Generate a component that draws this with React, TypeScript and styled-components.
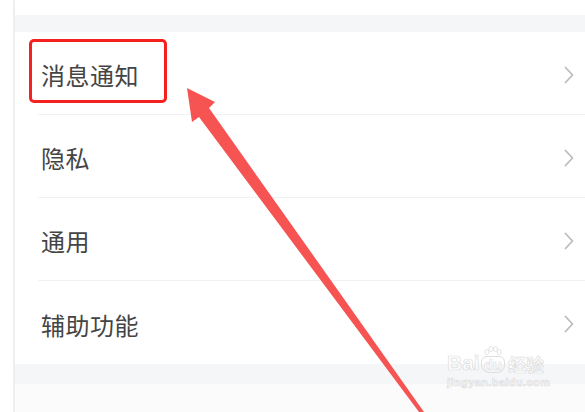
import React from "react";
import styled, { createGlobalStyle } from "styled-components";

const GlobalStyle = createGlobalStyle`
  html, body {
    margin: 0;
    padding: 0;
    background: #ffffff;
  }
  body {
    font-family: "Noto Sans CJK SC", "Noto Sans", sans-serif;
  }
`;

const Screen = styled.div`
  width: 585px;
  height: 412px;
  position: relative;
  overflow: hidden;
  display: flex;
  background: #ffffff;
`;

const Gutter = styled.div`
  width: 13px;
  flex-shrink: 0;
  border-right: 2px solid #efefef;
`;

const Main = styled.div`
  flex: 1;
  display: flex;
  flex-direction: column;
`;

const Spacer = styled.div<{ $h: number }>`
  height: ${(p) => p.$h}px;
  flex-shrink: 0;
`;

const Band = styled.div<{ $h: number }>`
  height: ${(p) => p.$h}px;
  flex-shrink: 0;
  background: #f5f6f8;
`;

const List = styled.div`
  display: flex;
  flex-direction: column;
`;

const Row = styled.div<{ $last?: boolean }>`
  height: 83px;
  margin-left: 23px;
  padding: 3px 11px 0 3px;
  box-sizing: border-box;
  display: flex;
  align-items: center;
  justify-content: space-between;
  border-bottom: ${(p) => (p.$last ? "none" : "1px solid #f1f1f1")};
`;

const Label = styled.span`
  font-size: 24px;
  color: #444444;
  letter-spacing: 0.5px;
`;

const Tail = styled.div`
  flex: 1;
  background: #fbfbfc;
`;

const Highlight = styled.div`
  position: absolute;
  left: 29px;
  top: 39px;
  width: 132px;
  height: 58px;
  border: 3px solid #f5211f;
  border-radius: 5px;
`;

const ArrowLayer = styled.svg`
  position: absolute;
  left: 0;
  top: 0;
  pointer-events: none;
`;

const Watermark = styled.div`
  position: absolute;
  left: 447px;
  top: 346px;
  display: flex;
  flex-direction: column;
  align-items: flex-start;
  color: rgba(255, 255, 255, 0.85);
  -webkit-text-stroke: 0.7px #dcdee1;
  font-family: "Liberation Sans", Arial, sans-serif;
`;

const MarkLine = styled.div`
  display: flex;
  align-items: flex-end;
  font-weight: 700;
  font-size: 21px;
  line-height: 1;
`;

const PawBox = styled.span`
  display: flex;
  flex-direction: column;
  align-items: center;
  margin: 0 3px 0 1px;
`;

const Du = styled.span`
  font-size: 15px;
  padding: 0 2px;
  border: 1px solid #dcdee1;
  border-radius: 6px 6px 8px 8px;
  -webkit-text-stroke: 0.6px #dcdee1;
`;

const MarkCn = styled.span`
  font-family: "Noto Sans CJK SC", sans-serif;
  font-size: 18px;
  font-weight: 700;
`;

const MarkUrl = styled.span`
  font-size: 11px;
  font-weight: 700;
  margin-top: 3px;
  letter-spacing: 0.4px;
`;

const Chevron = () => (
  <svg width="10" height="18" viewBox="0 0 10 18">
    <polyline
      points="1.5,1.5 8.5,9 1.5,16.5"
      fill="none"
      stroke="#bcbcbc"
      strokeWidth="1.8"
      strokeLinecap="round"
      strokeLinejoin="round"
    />
  </svg>
);

const Paw = () => (
  <svg width="18" height="10" viewBox="0 0 18 10">
    <g fill="none" stroke="#dcdee1" strokeWidth="0.8">
      <ellipse cx="3" cy="6" rx="2" ry="2.6" />
      <ellipse cx="7" cy="3" rx="2" ry="2.6" />
      <ellipse cx="11.5" cy="3" rx="2" ry="2.6" />
      <ellipse cx="15.2" cy="6" rx="2" ry="2.6" />
    </g>
  </svg>
);

const items = ["消息通知", "隐私", "通用", "辅助功能"];

export default function App() {
  return (
    <>
      <GlobalStyle />
      <Screen>
        <Gutter />
        <Main>
          <Spacer $h={15} />
          <Band $h={17} />
          <List>
            {items.map((t, i) => (
              <Row key={t} $last={i === items.length - 1}>
                <Label>{t}</Label>
                <Chevron />
              </Row>
            ))}
          </List>
          <Band $h={20} />
          <Tail />
        </Main>

        <Highlight />

        <ArrowLayer width="585" height="412" viewBox="0 0 585 412">
          <polygon
            points="187,88 215,102 209,108 424,412 419,412 199,117 192,122"
            fill="#f55453"
          />
        </ArrowLayer>

        <Watermark>
          <MarkLine>
            <span>Bai</span>
            <PawBox>
              <Paw />
              <Du>du</Du>
            </PawBox>
            <MarkCn>经验</MarkCn>
          </MarkLine>
          <MarkUrl>jingyan.baidu.com</MarkUrl>
        </Watermark>
      </Screen>
    </>
  );
}
